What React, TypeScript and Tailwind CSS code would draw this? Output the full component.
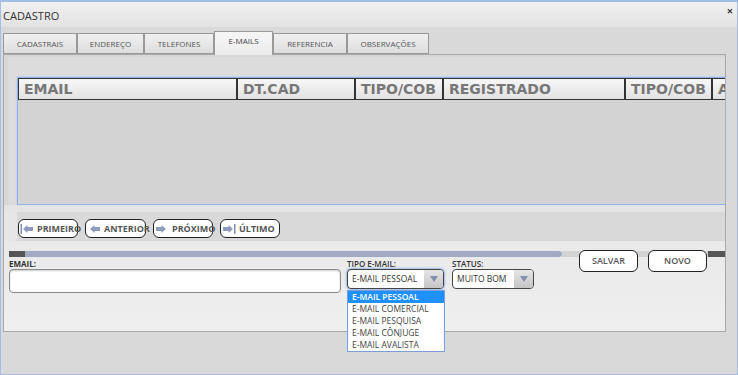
import React from "react";

const tabs = [
  { label: "CADASTRAIS", w: "w-[74px]" },
  { label: "ENDEREÇO", w: "w-[67px]" },
  { label: "TELEFONES", w: "w-[70px]" },
  { label: "E-MAILS", w: "w-[59px]", active: true },
  { label: "REFERENCIA", w: "w-[74px]" },
  { label: "OBSERVAÇÕES", w: "w-[82px]" },
];

const cols = [
  { label: "EMAIL", w: "w-[219px]" },
  { label: "DT.CAD", w: "w-[118px]" },
  { label: "TIPO/COB", w: "w-[88px]" },
  { label: "REGISTRADO", w: "w-[182px]" },
  { label: "TIPO/COB", w: "w-[87px]" },
  { label: "A", w: "w-[14px]" },
];

function Arrow({ dir, bar }: { dir: "left" | "right"; bar?: boolean }) {
  return (
    <svg width="14" height="10" viewBox="0 0 14 10" className="shrink-0">
      {dir === "left" ? (
        <>
          {bar && <rect x="0.5" y="0" width="1.5" height="10" fill="#7f8db0" />}
          <path d="M3 5 L7.5 1 L7.5 3 L13 3 L13 7 L7.5 7 L7.5 9 Z" fill="#8e9bbb" />
        </>
      ) : (
        <>
          <path d="M11 5 L6.5 1 L6.5 3 L1 3 L1 7 L6.5 7 L6.5 9 Z" fill="#8e9bbb" />
          {bar && <rect x="12" y="0" width="1.5" height="10" fill="#7f8db0" />}
        </>
      )}
    </svg>
  );
}

function NavBtn({ label, w, dir, bar }: { label: string; w: string; dir: "left" | "right"; bar?: boolean }) {
  return (
    <div className={`${w} h-[19px] bg-white border border-[#222] rounded-[6px] flex items-center pl-[1px] gap-[3px] whitespace-nowrap`}>
      <Arrow dir={dir} bar={bar} />
      <span className="text-[9px] font-bold text-[#555]">{label}</span>
    </div>
  );
}

function SelectBox({ value, w, focus }: { value: string; w: string; focus?: boolean }) {
  return (
    <div
      className={`${w} h-[20px] bg-white border border-[#444] rounded-[4px] flex overflow-hidden ${
        focus ? "shadow-[0_0_2px_1px_#9bb8ea]" : ""
      }`}
    >
      <div className="flex-1 flex items-center pl-[4px] text-[8.5px] text-[#333] whitespace-nowrap">{value}</div>
      <div className="w-[19px] bg-gradient-to-b from-[#e6e6e6] to-[#c4c4c4] flex items-center justify-center">
        <svg width="8" height="6" viewBox="0 0 8 6">
          <path d="M0 0 L8 0 L4 6 Z" fill="#8292ab" />
        </svg>
      </div>
    </div>
  );
}

export default function App() {
  return (
    <div className="w-[738px] h-[375px] bg-[#d9d9d9] border border-t-2 border-[#a3bde9] flex flex-col overflow-hidden font-['Open_Sans',sans-serif]">
      {/* title */}
      <div className="h-[25px] shrink-0 flex justify-between items-center pl-[2px] pr-[4px] pt-[4px] bg-gradient-to-b from-[#f1f1f1] to-[#e2e2e2]">
        <span className="text-[11px] text-[#333]">CADASTRO</span>
        <span className="text-[11px] font-bold text-[#333] -mt-[10px]">×</span>
      </div>

      {/* tabs */}
      <div className="h-[27px] shrink-0 flex items-end pl-[2px]">
        {tabs.map((t) =>
          t.active ? (
            <div
              key={t.label}
              className={`${t.w} h-[24px] -mb-[1px] relative z-10 bg-gradient-to-b from-[#f6f6f6] to-[#ececec] border border-b-0 border-[#999] flex justify-center pt-[3px] text-[8px] text-[#444]`}
            >
              {t.label}
            </div>
          ) : (
            <div
              key={t.label}
              className={`${t.w} h-[21px] bg-gradient-to-b from-[#f0f0f0] to-[#dedede] border border-[#999] flex items-center justify-center text-[8px] text-[#555]`}
            >
              {t.label}
            </div>
          )
        )}
      </div>

      {/* panel */}
      <div className="ml-[2px] w-[723px] h-[278px] shrink-0 border border-[#a8a8a8] flex flex-col">
        {/* grid area */}
        <div className="h-[150px] bg-[#d6d6d6] pl-[4px] pt-[2px] flex flex-col">
          <div className="flex-1 bg-[#dcdcdc] pt-[20px] pl-[9px] flex flex-col">
            <div className="flex-1 border-y border-l border-[#8fb0ea] shadow-[0_0_2px_#a9c2ee] bg-[#d3d3d3] overflow-hidden flex flex-col">
              <div className="h-[22px] flex border-y border-l border-[#333] bg-gradient-to-b from-[#f7f7f7] to-[#e2e2e2] whitespace-nowrap">
                {cols.map((c, i) => (
                  <div
                    key={i}
                    className={`${c.w} shrink-0 border-r-2 border-[#333] last:border-r-0 overflow-hidden pl-[5px] flex items-center font-['DejaVu_Sans',sans-serif] font-bold text-[14px] text-[#777]`}
                  >
                    {c.label}
                  </div>
                ))}
              </div>
            </div>
          </div>
        </div>
        <div className="h-[7px] bg-[#e4e4e4]" />

        {/* nav row */}
        <div className="h-[29px] bg-[#e6e6e6] pl-[13px] flex">
          <div className="flex-1 bg-[#d9d9d9] pt-[7px] pl-[1px] flex gap-[7px]">
            <NavBtn label="PRIMEIRO" w="w-[60px]" dir="left" bar />
            <NavBtn label="ANTERIOR" w="w-[61px]" dir="left" />
            <NavBtn label="PRÓXIMO" w="w-[60px]" dir="right" />
            <NavBtn label="ÚLTIMO" w="w-[60px]" dir="right" bar />
          </div>
        </div>

        {/* form */}
        <div className="flex-1 relative bg-gradient-to-b from-[#e9e9e9] to-[#efefef] pl-[5px] pt-[10px] flex flex-col">
          <div className="h-[6px] flex">
            <div className="w-[16px] bg-[#555]" />
            <div className="w-[537px] bg-[#a2aac3] rounded-r-[3px]" />
            <div className="flex-1 bg-[#d3d3d3]" />
            <div className="w-[17px] bg-[#555]" />
          </div>

          <div className="mt-[2px] flex">
            <div className="w-[332px] flex flex-col">
              <span className="h-[10px] leading-[10px] text-[8px] font-bold text-[#333]">EMAIL:</span>
              <div className="h-[24px] bg-white border border-[#8a8a8a] rounded-[4px] shadow-[inset_0_1px_2px_#ccc]" />
            </div>
            <div className="ml-[6px] flex flex-col relative">
              <span className="h-[10px] leading-[10px] text-[8px] font-semibold text-[#333]">TIPO E-MAIL:</span>
              <SelectBox value="E-MAIL PESSOAL" w="w-[97px]" focus />
              <div className="absolute left-0 top-[31px] w-[98px] bg-white border border-[#7b9ed6] z-20 flex flex-col text-[8.5px] text-[#444] leading-[12px] whitespace-nowrap">
                <span className="h-[12px] pl-[4px] bg-[#1e90ff] text-white font-semibold">E-MAIL PESSOAL</span>
                <span className="h-[12px] pl-[4px]">E-MAIL COMERCIAL</span>
                <span className="h-[12px] pl-[4px]">E-MAIL PESQUISA</span>
                <span className="h-[12px] pl-[4px]">E-MAIL CÔNJUGE</span>
                <span className="h-[12px] pl-[4px]">E-MAIL AVALISTA</span>
              </div>
            </div>
            <div className="ml-[8px] flex flex-col">
              <span className="h-[10px] leading-[10px] text-[8px] font-semibold text-[#333]">STATUS:</span>
              <SelectBox value="MUITO BOM" w="w-[82px]" />
            </div>
          </div>

          <div className="absolute left-[575px] top-[9px] flex gap-[10px]">
            <div className="w-[59px] h-[22px] bg-white border border-[#222] rounded-[6px] flex justify-center pt-[3px] text-[9px] font-semibold text-[#555]">
              SALVAR
            </div>
            <div className="w-[59px] h-[22px] bg-white border border-[#222] rounded-[6px] flex justify-center pt-[3px] text-[9px] font-semibold text-[#555]">
              NOVO
            </div>
          </div>
        </div>
      </div>
    </div>
  );
}
